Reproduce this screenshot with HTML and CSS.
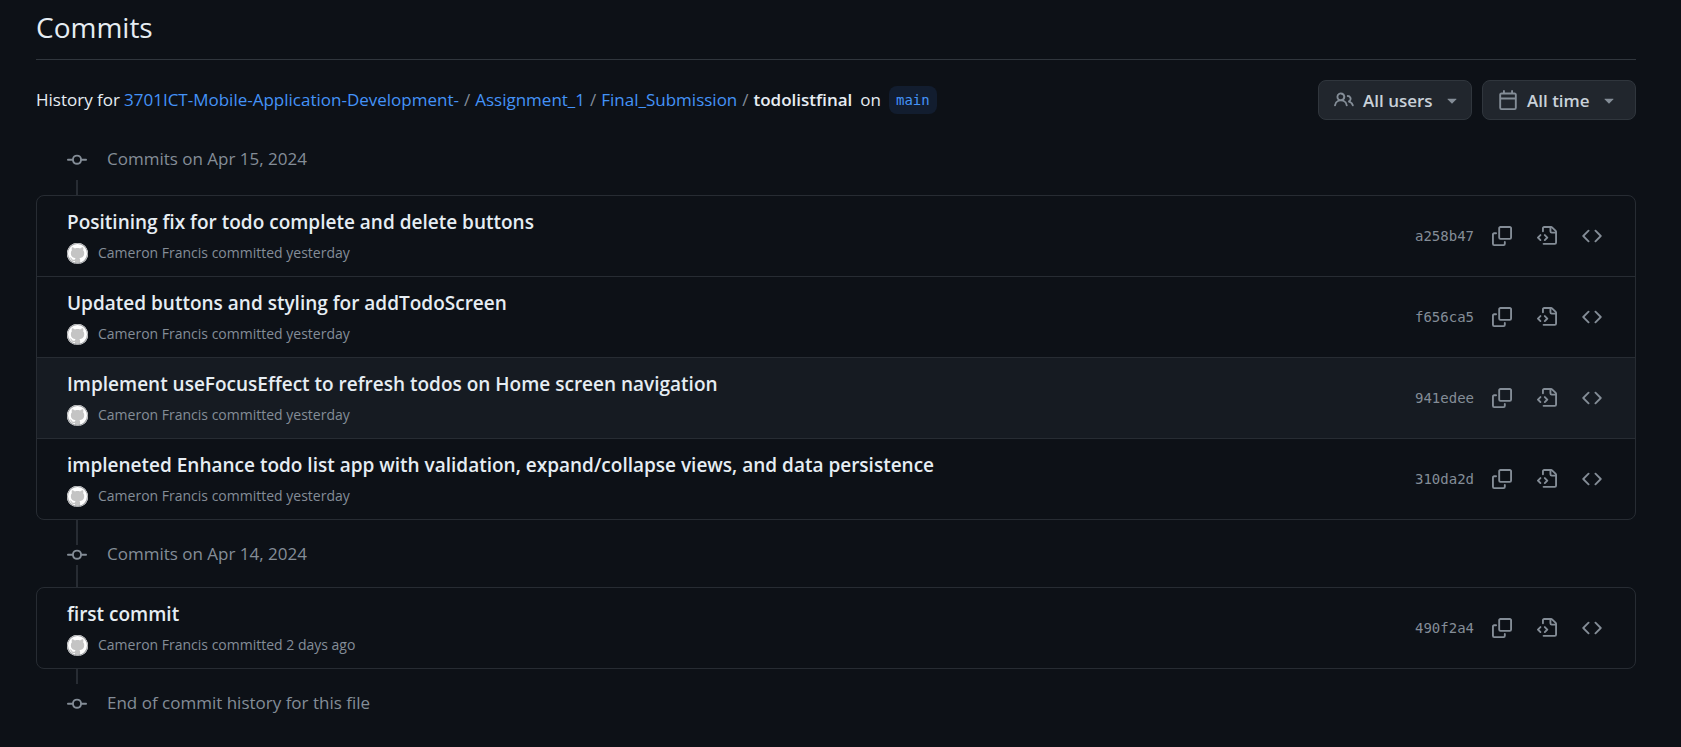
FILE: index.html
```html
<!DOCTYPE html>
<html lang="en">
<head>
<meta charset="utf-8">
<title>Commits</title>
<link rel="stylesheet" href="styles.css">
</head>
<body>
<svg class="sprite" aria-hidden="true">
  <symbol id="commit" viewBox="0 0 16 16"><path d="M11.93 8.5a4.002 4.002 0 0 1-7.86 0H.75a.75.75 0 0 1 0-1.5h3.32a4.002 4.002 0 0 1 7.86 0h3.32a.75.75 0 0 1 0 1.5Zm-1.43-.75a2.5 2.5 0 1 0-5 0 2.5 2.5 0 0 0 5 0Z"/></symbol>
  <symbol id="copy" viewBox="0 0 16 16"><path d="M0 6.75C0 5.784.784 5 1.75 5h1.5a.75.75 0 0 1 0 1.5h-1.5a.25.25 0 0 0-.25.25v7.5c0 .138.112.25.25.25h7.5a.25.25 0 0 0 .25-.25v-1.5a.75.75 0 0 1 1.5 0v1.5A1.75 1.75 0 0 1 9.25 16h-7.5A1.75 1.75 0 0 1 0 14.25Z"/><path d="M5 1.75C5 .784 5.784 0 6.75 0h7.5C15.216 0 16 .784 16 1.75v7.5A1.75 1.75 0 0 1 14.25 11h-7.5A1.75 1.75 0 0 1 5 9.25Zm1.75-.25a.25.25 0 0 0-.25.25v7.5c0 .138.112.25.25.25h7.5a.25.25 0 0 0 .25-.25v-7.5a.25.25 0 0 0-.25-.25Z"/></symbol>
  <symbol id="file" viewBox="0 0 16 16"><path d="M4 1.75C4 .784 4.784 0 5.75 0h5.586c.464 0 .909.184 1.237.513l2.914 2.914c.329.328.513.773.513 1.237v8.586A1.75 1.75 0 0 1 14.25 15h-9a.75.75 0 0 1 0-1.5h9a.25.25 0 0 0 .25-.25V6h-2.75A1.75 1.75 0 0 1 10 4.25V1.5H5.75a.25.25 0 0 0-.25.25v2.5a.75.75 0 0 1-1.5 0Zm1.72 4.97a.75.75 0 0 1 1.06 0l2 2a.75.75 0 0 1 0 1.06l-2 2a.749.749 0 0 1-1.275-.326.749.749 0 0 1 .215-.734l1.47-1.47-1.47-1.47a.75.75 0 0 1 0-1.06ZM3.28 7.78 1.81 9.25l1.47 1.47a.751.751 0 0 1-.018 1.042.751.751 0 0 1-1.042.018l-2-2a.75.75 0 0 1 0-1.06l2-2a.751.751 0 0 1 1.042.018.751.751 0 0 1 .018 1.042Zm8.22-6.218V4.25c0 .138.112.25.25.25h2.688l-.011-.013-2.914-2.914-.013-.011Z"/></symbol>
  <symbol id="code" viewBox="0 0 16 16"><path d="m11.28 3.22 4.25 4.25a.75.75 0 0 1 0 1.06l-4.25 4.25a.749.749 0 0 1-1.275-.326.749.749 0 0 1 .215-.734L13.94 8l-3.72-3.72a.749.749 0 0 1 .326-1.275.749.749 0 0 1 .734.215Zm-6.56 0a.751.751 0 0 1 1.042.018.751.751 0 0 1 .018 1.042L2.06 8l3.72 3.72a.749.749 0 0 1-.326 1.275.749.749 0 0 1-.734-.215L.47 8.53a.75.75 0 0 1 0-1.06Z"/></symbol>
  <symbol id="people" viewBox="0 0 16 16"><path d="M2 5.5a3.5 3.5 0 1 1 5.898 2.549 5.508 5.508 0 0 1 3.034 4.084.75.75 0 1 1-1.482.235 4 4 0 0 0-7.9 0 .75.75 0 0 1-1.482-.236A5.507 5.507 0 0 1 3.102 8.05 3.493 3.493 0 0 1 2 5.5ZM11 4a3.001 3.001 0 0 1 2.22 5.018 5.01 5.01 0 0 1 2.56 3.012.749.749 0 0 1-.885.954.752.752 0 0 1-.549-.514 3.507 3.507 0 0 0-2.522-2.372.75.75 0 0 1-.574-.73v-.352a.75.75 0 0 1 .416-.672A1.5 1.5 0 0 0 11 5.5.75.75 0 0 1 11 4Zm-5.5-.5a2 2 0 1 0-.001 3.999A2 2 0 0 0 5.5 3.5Z"/></symbol>
  <symbol id="calendar" viewBox="0 0 16 16"><path d="M4.75 0a.75.75 0 0 1 .75.75V2h5V.75a.75.75 0 0 1 1.5 0V2h1.25c.966 0 1.75.784 1.75 1.75v10.5A1.75 1.75 0 0 1 13.25 16H2.75A1.75 1.75 0 0 1 1 14.25V3.75C1 2.784 1.784 2 2.75 2H4V.75A.75.75 0 0 1 4.75 0ZM2.5 7.5v6.75c0 .138.112.25.25.25h10.5a.25.25 0 0 0 .25-.25V7.5Zm10.75-4H2.75a.25.25 0 0 0-.25.25V6h11V3.75a.25.25 0 0 0-.25-.25Z"/></symbol>
  <symbol id="caret" viewBox="0 0 16 16"><path d="m4.427 7.427 3.396 3.396a.25.25 0 0 0 .354 0l3.396-3.396A.25.25 0 0 0 11.396 7H4.604a.25.25 0 0 0-.177.427Z"/></symbol>
  <symbol id="avatar" viewBox="0 0 16 16"><circle cx="8" cy="8" r="8" fill="#c4c4c4"/><path fill="#fff" d="M8 0c4.42 0 8 3.58 8 8a8.013 8.013 0 0 1-5.45 7.59c-.4.08-.55-.17-.55-.38 0-.27.01-1.13.01-2.2 0-.75-.25-1.23-.54-1.48 1.78-.2 3.65-.88 3.65-3.95 0-.88-.31-1.59-.82-2.15.08-.2.36-1.02-.08-2.12 0 0-.67-.22-2.2.82-.64-.18-1.32-.27-2-.27-.68 0-1.36.09-2 .27-1.53-1.03-2.2-.82-2.2-.82-.44 1.1-.16 1.92-.08 2.12-.51.56-.82 1.28-.82 2.15 0 3.06 1.86 3.75 3.64 3.95-.23.2-.44.55-.51 1.07-.46.21-1.61.55-2.33-.66-.15-.24-.6-.83-1.23-.82-.67.01-.27.38.01.53.34.19.73.9.82 1.13.16.45.68 1.31 2.69.94 0 .67.01 1.3.01 1.49 0 .21-.15.45-.55.38A7.995 7.995 0 0 1 0 8c0-4.42 3.58-8 8-8Z"/><circle cx="8" cy="8" r="7.6" fill="none" stroke="#a3a5a8" stroke-width=".8"/></symbol>
</svg>
<main class="page">
  <h1 class="page-title">Commits</h1>
  <div class="toolbar">
    <nav class="crumbs" aria-label="History path">
      <span>History for</span>
      <a href="#">3701ICT-Mobile-Application-Development-</a>
      <span class="sep">/</span>
      <a href="#">Assignment_1</a>
      <span class="sep">/</span>
      <a href="#">Final_Submission</a>
      <span class="sep">/</span>
      <strong>todolistfinal</strong>
      <span class="on">on</span>
      <a class="branch" href="#">main</a>
    </nav>
    <div class="filters">
      <button class="filter" type="button"><svg class="icon"><use href="#people"/></svg><span>All users</span><svg class="icon"><use href="#caret"/></svg></button>
      <button class="filter" type="button"><svg class="icon"><use href="#calendar"/></svg><span>All time</span><svg class="icon"><use href="#caret"/></svg></button>
    </div>
  </div>

  <section class="day">
    <div class="marker first"><svg class="icon"><use href="#commit"/></svg><h2>Commits on Apr 15, 2024</h2></div>
    <ol class="list">
      <li class="row">
        <div class="info"><h3><a href="#">Positining fix for todo complete and delete buttons</a></h3><p><svg class="icon avatar"><use href="#avatar"/></svg>Cameron Francis committed yesterday</p></div>
        <div class="actions"><a class="sha" href="#">a258b47</a><button type="button" aria-label="Copy SHA"><svg class="icon"><use href="#copy"/></svg></button><button type="button" aria-label="View code at this point"><svg class="icon"><use href="#file"/></svg></button><button type="button" aria-label="Browse repository"><svg class="icon"><use href="#code"/></svg></button></div>
      </li>
      <li class="row">
        <div class="info"><h3><a href="#">Updated buttons and styling for addTodoScreen</a></h3><p><svg class="icon avatar"><use href="#avatar"/></svg>Cameron Francis committed yesterday</p></div>
        <div class="actions"><a class="sha" href="#">f656ca5</a><button type="button" aria-label="Copy SHA"><svg class="icon"><use href="#copy"/></svg></button><button type="button" aria-label="View code at this point"><svg class="icon"><use href="#file"/></svg></button><button type="button" aria-label="Browse repository"><svg class="icon"><use href="#code"/></svg></button></div>
      </li>
      <li class="row active">
        <div class="info"><h3><a href="#">Implement useFocusEffect to refresh todos on Home screen navigation</a></h3><p><svg class="icon avatar"><use href="#avatar"/></svg>Cameron Francis committed yesterday</p></div>
        <div class="actions"><a class="sha" href="#">941edee</a><button type="button" aria-label="Copy SHA"><svg class="icon"><use href="#copy"/></svg></button><button type="button" aria-label="View code at this point"><svg class="icon"><use href="#file"/></svg></button><button type="button" aria-label="Browse repository"><svg class="icon"><use href="#code"/></svg></button></div>
      </li>
      <li class="row">
        <div class="info"><h3><a href="#">impleneted Enhance todo list app with validation, expand/collapse views, and data persistence</a></h3><p><svg class="icon avatar"><use href="#avatar"/></svg>Cameron Francis committed yesterday</p></div>
        <div class="actions"><a class="sha" href="#">310da2d</a><button type="button" aria-label="Copy SHA"><svg class="icon"><use href="#copy"/></svg></button><button type="button" aria-label="View code at this point"><svg class="icon"><use href="#file"/></svg></button><button type="button" aria-label="Browse repository"><svg class="icon"><use href="#code"/></svg></button></div>
      </li>
    </ol>
  </section>

  <section class="day">
    <div class="marker middle"><svg class="icon"><use href="#commit"/></svg><h2>Commits on Apr 14, 2024</h2></div>
    <ol class="list">
      <li class="row">
        <div class="info"><h3><a href="#">first commit</a></h3><p><svg class="icon avatar"><use href="#avatar"/></svg>Cameron Francis committed 2 days ago</p></div>
        <div class="actions"><a class="sha" href="#">490f2a4</a><button type="button" aria-label="Copy SHA"><svg class="icon"><use href="#copy"/></svg></button><button type="button" aria-label="View code at this point"><svg class="icon"><use href="#file"/></svg></button><button type="button" aria-label="Browse repository"><svg class="icon"><use href="#code"/></svg></button></div>
      </li>
    </ol>
  </section>

  <div class="marker last"><svg class="icon"><use href="#commit"/></svg><h2>End of commit history for this file</h2></div>
</main>
</body>
</html>
```
FILE: styles.css
```css
* { box-sizing: border-box; }

body {
  margin: 0;
  background: #0d1117;
  color: #e6edf3;
  font-family: "Open Sans", "Noto Sans", sans-serif;
  font-size: 17px;
  line-height: 24px;
}

h1, h2, h3, p, ol { margin: 0; padding: 0; font-weight: 400; }
ol { list-style: none; }
a { color: #4493f8; text-decoration: none; }
button { font: inherit; color: inherit; cursor: pointer; }

.sprite { display: none; }
.icon { display: block; flex: none; width: 20px; height: 20px; fill: #848d97; }

.page { padding: 7px 45px 0 36px; }

.page-title {
  padding-bottom: 12px;
  border-bottom: 1px solid #30363d;
  font-size: 28px;
  line-height: 40px;
}

.toolbar {
  display: flex;
  align-items: center;
  justify-content: space-between;
  margin-top: 20px;
}

.crumbs { display: flex; align-items: center; gap: 4px; }
.crumbs .sep { padding: 0 1px; color: #848d97; }
.crumbs strong { font-weight: 600; }
.crumbs .on { padding: 0 4px; }

.branch {
  padding: 2px 7px;
  border-radius: 8px;
  background: #121d2f;
  font-family: "DejaVu Sans Mono", monospace;
  font-size: 14px;
}

.filters { display: flex; gap: 10px; }

.filter {
  display: flex;
  align-items: center;
  gap: 9px;
  width: 154px;
  height: 40px;
  padding: 0 0 0 15px;
  border: 1px solid #30363d;
  border-radius: 8px;
  background: #21262d;
  color: #c9d1d9;
  font-weight: 600;
  white-space: nowrap;
}
.filter span { padding-top: 2px; }

/* Timeline segments are drawn behind each marker's icon column. */
.marker {
  display: flex;
  align-items: center;
  padding-left: 31px;
  background-image: linear-gradient(#272c33, #272c33), linear-gradient(#272c33, #272c33);
  background-repeat: no-repeat;
  background-position: 40px 0, 40px 100%;
  color: #848d97;
}
.marker h2 { margin-left: 20px; padding-bottom: 2px; font-size: 17px; }
.first { height: 75px; padding-top: 4px; background-size: 2px 0, 2px 15px; }
.middle { height: 67px; padding-top: 3px; background-size: 2px 25px, 2px 22px; }
.last { height: 70px; background-size: 2px 15px, 2px 0; }

.list { border: 1px solid #272c33; border-radius: 8px; overflow: hidden; }

.row {
  display: flex;
  align-items: center;
  justify-content: space-between;
  padding: 0 26px 0 30px;
}
.row + .row { border-top: 1px solid #272c33; }
.active { background: #161b22; }

.info { padding: 13px 0 11px; }
.row h3 { font-size: 19px; line-height: 26px; }
.row h3 a { color: #e6edf3; font-weight: 600; }
.row p { display: flex; align-items: center; gap: 10px; margin-top: 6px; color: #848d97; font-size: 14px; line-height: 24px; }
.avatar { width: 21px; height: 21px; }

.actions { display: flex; align-items: center; gap: 11px; }
.actions button { padding: 7px; border: 0; background: none; }
.sha { color: #848d97; font-family: "DejaVu Sans Mono", monospace; font-size: 14px; }
```
